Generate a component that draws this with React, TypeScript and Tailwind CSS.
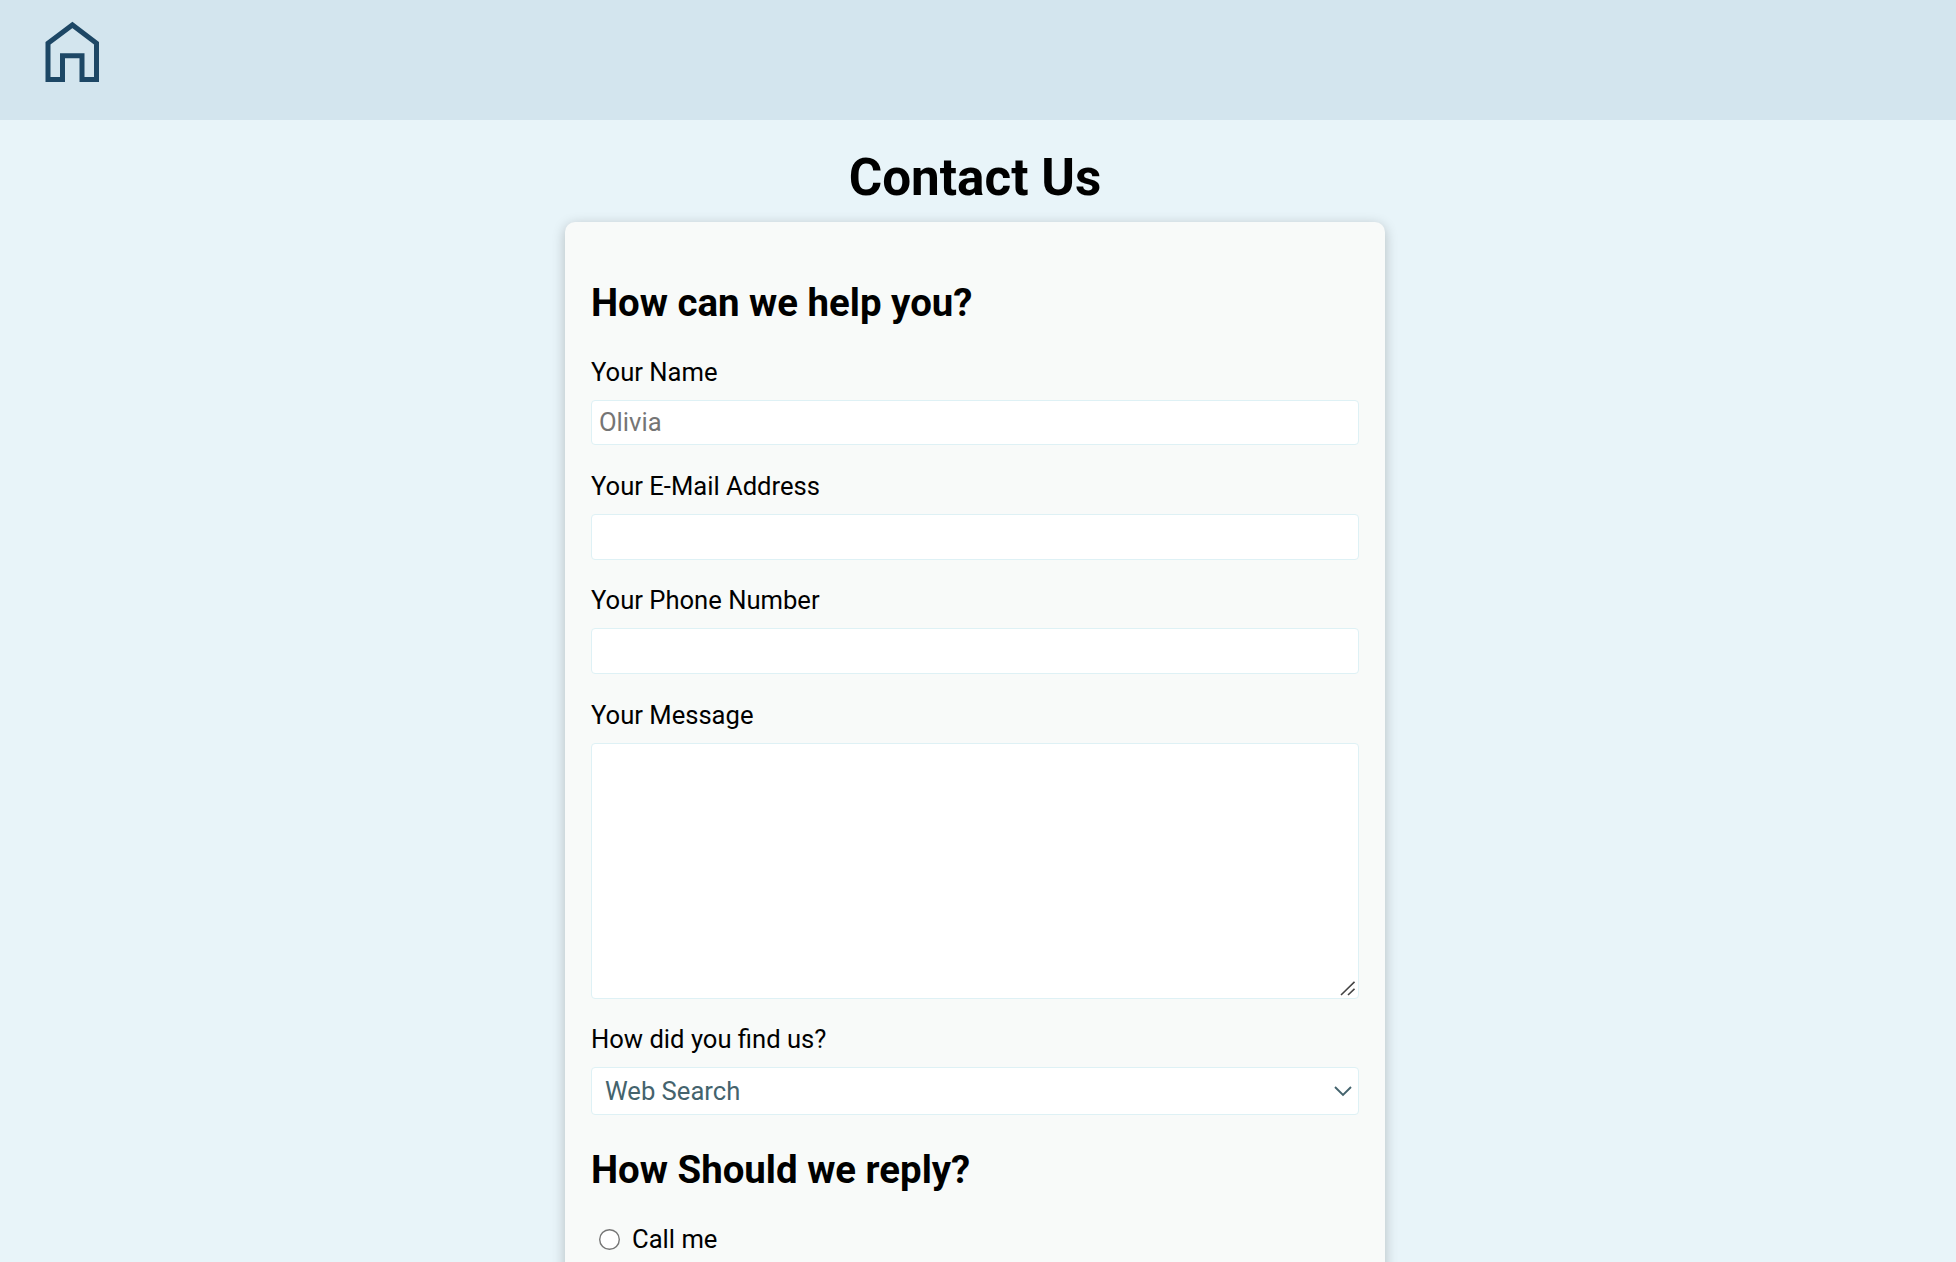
import React from "react";
import clsx from "clsx";

interface FieldProps {
  label: string;
  htmlFor: string;
  className?: string;
  children: React.ReactNode;
}

const inputStyles =
  "block w-full rounded-[4px] border border-[#def1f5] bg-white text-[25.6px] leading-[30px] outline-none";

const HomeIcon = () => (
  <svg width="60" height="64" viewBox="0 0 60 64" fill="none">
    <path
      d="M6 59.5V23.2L30.4 5L54.5 23.2V59.5H40V35.7H20.5V59.5Z"
      stroke="#1d4765"
      strokeWidth="5"
    />
  </svg>
);

const Field = ({ label, htmlFor, className, children }: FieldProps) => (
  <div className={clsx("flex flex-col gap-[13px]", className)}>
    <label htmlFor={htmlFor} className="leading-[30px]">
      {label}
    </label>
    {children}
  </div>
);

const ContactForm = () => (
  <form className="w-[820px] h-[1400px] shrink-0 rounded-[10px] bg-[#f8faf9] px-[26px] pt-[58px] shadow-[0_3px_13px_rgba(0,0,0,0.23)]">
    <h2 className="mb-8 text-[38.4px] leading-[45px] font-bold">
      How can we help you?
    </h2>

    <Field label="Your Name" htmlFor="name" className="mb-[26px]">
      <input
        id="name"
        type="text"
        placeholder="Olivia"
        className={clsx(inputStyles, "h-[45px] px-[7px] pb-[2px] placeholder:text-[#757575]")}
      />
    </Field>

    <Field label="Your E-Mail Address" htmlFor="email" className="mb-[25px]">
      <input id="email" type="email" className={clsx(inputStyles, "h-[46px] px-[7px]")} />
    </Field>

    <Field label="Your Phone Number" htmlFor="phone" className="mb-[26px]">
      <input id="phone" type="tel" className={clsx(inputStyles, "h-[46px] px-[7px]")} />
    </Field>

    <Field label="Your Message" htmlFor="message" className="mb-[25px]">
      <div className="relative">
        <textarea
          id="message"
          className={clsx(inputStyles, "h-[256px] resize-none p-[7px]")}
        />
        {/* Resize handle */}
        <svg
          className="absolute right-[4px] bottom-[3px]"
          width="15"
          height="15"
          viewBox="0 0 15 15"
          fill="none"
        >
          <path d="M1 14L14.5 0.8M8 14L14.5 7.8" stroke="#444" strokeWidth="1.6" />
        </svg>
      </div>
    </Field>

    <Field label="How did you find us?" htmlFor="source" className="mb-8">
      <div className="relative">
        <select
          id="source"
          className={clsx(inputStyles, "h-[48px] appearance-none pl-[13px] text-[#44636d]")}
        >
          <option>Web Search</option>
        </select>
        <svg
          className="absolute top-[19px] right-[7px] pointer-events-none"
          width="18"
          height="11"
          viewBox="0 0 18 11"
          fill="none"
        >
          <path d="M1 1L9 9L17 1" stroke="#44636d" strokeWidth="1.9" />
        </svg>
      </div>
    </Field>

    <h2 className="mb-8 text-[38.4px] leading-[45px] font-bold">
      How Should we reply?
    </h2>

    <label className="flex items-center gap-[12px] pl-2 leading-[30px]">
      <svg width="21" height="21" viewBox="0 0 21 21" aria-hidden="true">
        <circle cx="10.5" cy="10.5" r="9.8" fill="#fff" stroke="#767676" strokeWidth="1.4" />
      </svg>
      <input type="radio" name="reply" className="sr-only" />
      Call me
    </label>
  </form>
);

export default function App() {
  return (
    <div className="h-screen overflow-hidden bg-[#e8f4f9] font-[Roboto,sans-serif] text-[25.6px] text-black">
      <header className="h-[120px] bg-[#d3e5ee] pt-5 pl-[42px]">
        <a href="#" aria-label="Home" className="inline-block">
          <HomeIcon />
        </a>
      </header>
      <main className="flex flex-col items-center pt-[28px] pr-[6px]">
        <h1 className="mb-[14px] text-[51.2px] leading-[60px] font-bold">
          Contact Us
        </h1>
        <ContactForm />
      </main>
    </div>
  );
}
